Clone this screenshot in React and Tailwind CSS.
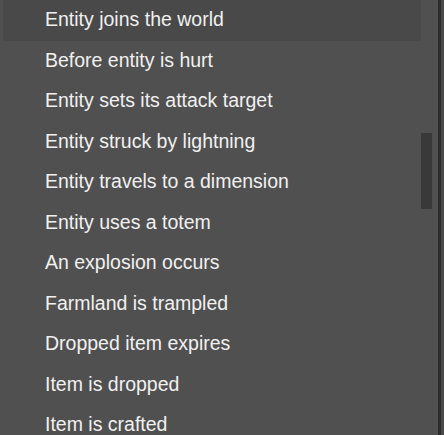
import React from "react";

const items = [
  "Entity joins the world",
  "Before entity is hurt",
  "Entity sets its attack target",
  "Entity struck by lightning",
  "Entity travels to a dimension",
  "Entity uses a totem",
  "An explosion occurs",
  "Farmland is trampled",
  "Dropped item expires",
  "Item is dropped",
  "Item is crafted",
];

export default function App() {
  return (
    <div className="flex h-[435px] w-[444px] overflow-hidden bg-[#505050]" style={{ fontFamily: '"Liberation Sans", Arial, sans-serif' }}>
      <div className="relative flex-1 pl-[3px]">
        <div className="flex w-[418px] flex-col">
          {items.map((t, i) => (
            <div
              key={t}
              className={`flex h-[40.5px] shrink-0 items-center pl-[42px] text-[19.5px] leading-none text-[#f0f0f0] ${i === 0 ? "bg-[#494949]" : ""}`}
            >
              <span className="-mt-[1px]">{t}</span>
            </div>
          ))}
        </div>
        <div className="absolute left-[421px] top-[133px] h-[76px] w-[11px] bg-[#393939]" />
      </div>
      <div className="w-[3px] bg-[#2c2c2c]" />
      <div className="w-[3px] bg-[#4a4a4a]" />
    </div>
  );
}
